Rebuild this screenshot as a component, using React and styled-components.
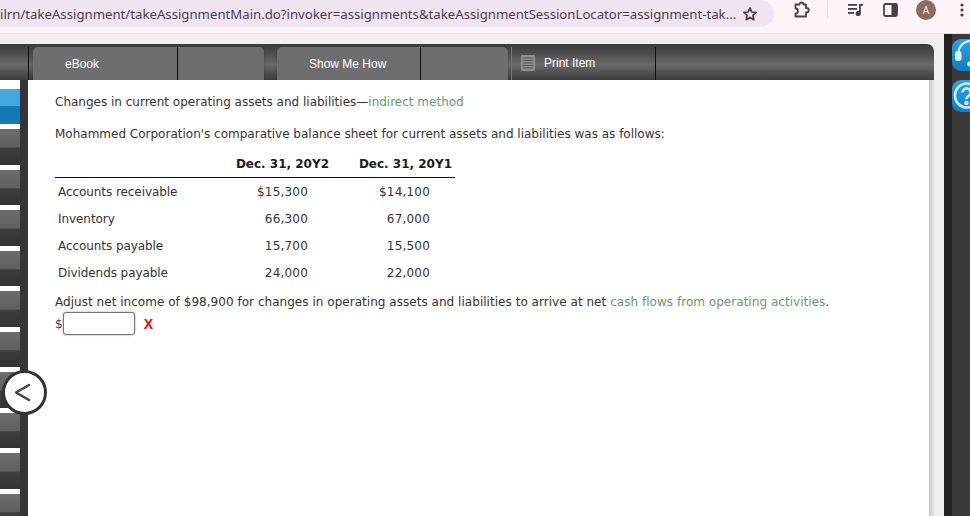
import React from "react";
import styled, { createGlobalStyle } from "styled-components";

const Global = createGlobalStyle`
  html, body { margin: 0; padding: 0; height: 100%; overflow: hidden; background: #efefef; }
  #root { height: 100%; }
  * { box-sizing: border-box; }
`;

const Page = styled.div`
  width: 970px;
  height: 516px;
  overflow: hidden;
  display: flex;
  flex-direction: column;
  font-family: "DejaVu Sans", Verdana, sans-serif;
`;

/* browser chrome */
const BrowserBar = styled.div`
  height: 34px;
  flex: none;
  display: flex;
  align-items: flex-start;
  background: #fdf4f7;
  border-bottom: 1px solid #f1dfe7;
`;

const Omnibox = styled.div`
  width: 774px;
  height: 27px;
  flex: none;
  display: flex;
  align-items: center;
  padding-right: 16px;
  background: #f0e4f0;
  border-radius: 0 14px 14px 0;
`;

const Url = styled.span`
  flex: 1;
  min-width: 0;
  white-space: nowrap;
  font-family: "Noto Sans", sans-serif;
  font-size: 13.2px;
  color: #4a4048;
`;

const ChromeIcons = styled.div`
  flex: 1;
  height: 20px;
  display: flex;
  align-items: center;
`;

const ChromeIcon = styled.svg`
  flex: none;
  display: block;
  margin-left: ${(p) => p.$left}px;
`;

const Separator = styled.div`
  width: 1px;
  height: 16px;
  flex: none;
  margin-left: 17px;
  background: #f6d3e6;
`;

const Avatar = styled.div`
  width: 20px;
  height: 20px;
  flex: none;
  margin-left: 18px;
  display: flex;
  align-items: center;
  justify-content: center;
  border-radius: 50%;
  background: #8c6a5d;
  color: #f4e9e6;
  font-family: "Noto Sans", sans-serif;
  font-size: 10px;
`;

/* page */
const Stage = styled.div`
  flex: 1;
  min-height: 0;
  display: flex;
`;

const Course = styled.div`
  width: 934px;
  flex: none;
  display: flex;
  flex-direction: column;
  padding-top: 10px;
`;

const Toolbar = styled.div`
  height: 36px;
  flex: none;
  display: flex;
  padding-top: 3px;
  border-radius: 0 7px 0 0;
  background: linear-gradient(#3a3a3a 0%, #4d4d4d 25%, #6a6a6a 58%, #4a4a4a 85%, #3c3c3c 100%);
`;

const ToolbarLead = styled.div`
  width: 29px;
  flex: none;
  border-right: 1px solid #111;
`;

const ToolGroup = styled.div`
  width: 231px;
  flex: none;
  display: flex;
  margin-left: ${(p) => p.$left}px;
  border-radius: 5px 5px 0 0;
  background: #6e6e6e;
  box-shadow: 0 1px 3px rgba(0, 0, 0, 0.25);
`;

const ToolButton = styled.div`
  width: ${(p) => p.$width}px;
  flex: none;
  padding-left: ${(p) => p.$pad}px;
  padding-top: 1px;
  display: flex;
  align-items: center;
  border-right: ${(p) => (p.$line ? "1px solid #111" : "none")};
  font-family: "Liberation Sans", Arial, sans-serif;
  font-size: 12px;
  color: #fff;
`;

const PrintItem = styled.div`
  width: 145px;
  flex: none;
  margin-left: 3px;
  padding: 0 0 1px 9px;
  display: flex;
  align-items: center;
  gap: 9px;
  border-left: 1px solid #777;
  border-right: 1px solid #111;
  font-family: "Liberation Sans", Arial, sans-serif;
  font-size: 12px;
  color: #fff;
`;

const Workspace = styled.div`
  flex: 1;
  min-height: 0;
  display: flex;
  position: relative;
`;

/* left rail */
const Rail = styled.div`
  width: 28px;
  flex: none;
  padding-top: 8.5px;
  display: flex;
  flex-direction: column;
  gap: 5px;
  background: #fff;
  border-right: 8px solid #353535;
  overflow: hidden;
`;

const RailItem = styled.div`
  height: 35.5px;
  flex: none;
  background: ${(p) =>
    p.$active
      ? "linear-gradient(#45a6e0 0, #45a6e0 50%, #1679b6 50%, #1679b6 100%)"
      : "linear-gradient(#6d6d6d 0, #5f5f5f 50%, #3d3d3d 54%, #333 100%)"};
`;

const BackButton = styled.button`
  position: absolute;
  left: 2px;
  top: 290px;
  width: 45px;
  height: 45px;
  padding: 0 5px 0 0;
  display: flex;
  align-items: center;
  justify-content: center;
  border: 3px solid #333;
  border-radius: 50%;
  background: #fff;
`;

/* assignment content */
const Content = styled.main`
  width: 901px;
  flex: none;
  padding: 14px 0 0 27px;
  background: #fff;
  color: #333;
  font-size: 12px;
  line-height: 16px;
`;

const Shadow = styled.div`
  flex: 1;
  background: linear-gradient(90deg, #c9c9c9, #e6e6e6);
`;

const Paragraph = styled.p`
  margin: 0 0 ${(p) => p.$after || 0}px;
  white-space: nowrap;
  letter-spacing: ${(p) => p.$track || 0}px;
`;

const Term = styled.span`
  color: #679a70;
`;

const Balance = styled.table`
  width: 400px;
  table-layout: fixed;
  border-collapse: collapse;
  margin-bottom: 8px;
`;

const HeadCell = styled.th`
  height: 21px;
  padding: 0 3px 5px 0;
  text-align: right;
  font-weight: 700;
  color: #1c1c1c;
  border-bottom: 1px solid #111;
  width: ${(p) => p.$width}px;
`;

const LabelCell = styled.td`
  height: 27px;
  padding: 2px 0 0 3px;
  letter-spacing: -0.07px;
`;

const ValueCell = styled.td`
  height: 27px;
  padding: 2px ${(p) => p.$right}px 0 0;
  text-align: right;
  letter-spacing: 0.2px;
`;

const AnswerRow = styled.div`
  height: 24px;
  display: flex;
  align-items: center;
  margin-top: 2px;
`;

const Currency = styled.span`
  color: #444;
`;

const AnswerInput = styled.input`
  width: 72px;
  height: 23px;
  padding: 0;
  border: 1px solid #777;
  border-radius: 3px;
  background: #fff;
  box-shadow: 0 0 2px rgba(0, 0, 0, 0.45);
`;

const WrongMark = styled.span`
  margin-left: 9px;
  font-family: "Liberation Sans", Arial, sans-serif;
  font-size: 14px;
  font-weight: 700;
  color: #f00;
`;

/* right panel */
const SidePanel = styled.aside`
  flex: 1;
  margin-left: 10px;
  padding: 5px 0 0 8px;
  display: flex;
  flex-direction: column;
  gap: 9px;
  overflow: hidden;
  background: linear-gradient(90deg, #222 0, #222 30%, #3a3a3a 31%, #3a3a3a 100%);
`;

const SideButton = styled.div`
  width: 40px;
  height: 32px;
  flex: none;
  border-radius: 9px;
  background: linear-gradient(#26a4ea, #0f7fc6);
`;

const rows = [
  ["Accounts receivable", "$15,300", "$14,100"],
  ["Inventory", "66,300", "67,000"],
  ["Accounts payable", "15,700", "15,500"],
  ["Dividends payable", "24,000", "22,000"],
];

export default function App() {
  return (
    <Page>
      <Global />
      <BrowserBar>
        <Omnibox>
          <Url>ilrn/takeAssignment/takeAssignmentMain.do?invoker=assignments&amp;takeAssignmentSessionLocator=assignment-tak...</Url>
          <svg width="16" height="16" viewBox="0 0 24 24" fill="none" stroke="#4a3f48" strokeWidth="2.6" strokeLinejoin="round">
            <path d="M12 3l2.7 6 6.5.7-4.9 4.3 1.4 6.5L12 17.2 6.3 20.5l1.4-6.5L2.800 9.700 9.300 9z" />
          </svg>
        </Omnibox>
        <ChromeIcons>
          <ChromeIcon $left={18} width="18" height="18" viewBox="0 0 18 18" fill="none" stroke="#4a3f48" strokeWidth="1.8" strokeLinejoin="round">
            <path d="M3.500 3.500H7.500a2 2 0 0 1 4 0H14V7h.5a2 2 0 0 1 0 4.500H14V15.500H3.500V12.500a2.500 2.500 0 0 0 0-5z" />
          </ChromeIcon>
          <Separator />
          <ChromeIcon $left={20} width="16" height="14" viewBox="0 0 16 14" fill="#4a3f48">
            <rect x="0" y="1" width="9" height="1.8" />
            <rect x="0" y="5" width="9" height="1.8" />
            <rect x="0" y="9" width="6" height="1.8" />
            <rect x="11" y="1" width="4" height="1.8" />
            <rect x="11" y="1" width="1.8" height="9" />
            <circle cx="10.2" cy="10.5" r="2.6" />
          </ChromeIcon>
          <ChromeIcon $left={19} width="15" height="14" viewBox="0 0 15 14">
            <rect x="1" y="1" width="13" height="12" rx="1.5" fill="#fdf4f7" stroke="#4a3f48" strokeWidth="1.8" />
            <rect x="8.5" y="1" width="5.5" height="12" fill="#4a3f48" />
          </ChromeIcon>
          <Avatar>A</Avatar>
          <ChromeIcon $left={24} width="4" height="14" viewBox="0 0 4 14" fill="#4a3f48">
            <circle cx="2" cy="2" r="1.6" />
            <circle cx="2" cy="7" r="1.6" />
            <circle cx="2" cy="12" r="1.6" />
          </ChromeIcon>
        </ChromeIcons>
      </BrowserBar>

      <Stage>
        <Course>
          <Toolbar>
            <ToolbarLead />
            <ToolGroup $left={4}>
              <ToolButton $width={145} $pad={32} $line>eBook</ToolButton>
              <ToolButton $width={86} />
            </ToolGroup>
            <ToolGroup $left={13}>
              <ToolButton $width={144} $pad={32} $line>Show Me How</ToolButton>
              <ToolButton $width={87} />
            </ToolGroup>
            <PrintItem>
              <svg width="14" height="16" viewBox="0 0 14 16">
                <rect width="14" height="16" fill="#8d8d8d" />
                <path d="M2 3h10M2 5.500h10M2 8h10M2 10.500h10M2 13h10" stroke="#555" strokeWidth="1" />
              </svg>
              Print Item
            </PrintItem>
          </Toolbar>
          <Workspace>
            <Rail>
              {Array.from({ length: 11 }, (_, i) => (
                <RailItem key={i} $active={i === 0} />
              ))}
            </Rail>
            <Content>
              <Paragraph $after={16}>
                Changes in current operating assets and liabilities—<Term>indirect method</Term>
              </Paragraph>
              <Paragraph $after={14}>
                Mohammed Corporation's comparative balance sheet for current assets and liabilities was as follows:
              </Paragraph>
              <Balance>
                <thead>
                  <tr>
                    <HeadCell $width={150} />
                    <HeadCell $width={127}>Dec. 31, 20Y2</HeadCell>
                    <HeadCell $width={123}>Dec. 31, 20Y1</HeadCell>
                  </tr>
                </thead>
                <tbody>
                  {rows.map(([label, current, prior]) => (
                    <tr key={label}>
                      <LabelCell>{label}</LabelCell>
                      <ValueCell $right={24}>{current}</ValueCell>
                      <ValueCell $right={25}>{prior}</ValueCell>
                    </tr>
                  ))}
                </tbody>
              </Balance>
              <Paragraph $track={0.035}>
                Adjust net income of $98,900 for changes in operating assets and liabilities to arrive at net <Term>cash flows from operating activities</Term>.
              </Paragraph>
              <AnswerRow>
                <Currency>$</Currency>
                <AnswerInput aria-label="Answer" />
                <WrongMark>X</WrongMark>
              </AnswerRow>
            </Content>
            <Shadow />
            <BackButton aria-label="Collapse">
              <svg width="17" height="19" viewBox="0 0 17 19" fill="none" stroke="#444" strokeWidth="2.5" strokeLinecap="round" strokeLinejoin="round">
                <path d="M15 2L2 9.500l13 7.500" />
              </svg>
            </BackButton>
          </Workspace>
        </Course>
        <SidePanel>
          <SideButton>
            <svg width="40" height="32" viewBox="0 0 40 32" fill="none" stroke="#dff2fb" strokeWidth="2.2">
              <path d="M6.500 16V14A12 12 0 0 1 30.500 14" />
              <rect x="4" y="13" width="4.500" height="8" rx="2" fill="#dff2fb" />
              <circle cx="17.500" cy="25" r="1.300" fill="#dff2fb" />
            </svg>
          </SideButton>
          <SideButton>
            <svg width="40" height="32" viewBox="0 0 40 32" fill="none" stroke="#cfe6f4" strokeWidth="2.6">
              <circle cx="15" cy="15.500" r="12" />
              <path d="M10.500 12.500a4 4 0 1 1 6.200 3.300c-1.700 1.100-2.300 1.800-2.300 3.500" />
              <circle cx="14.500" cy="23" r="1" fill="#cfe6f4" />
            </svg>
          </SideButton>
        </SidePanel>
      </Stage>
    </Page>
  );
}
